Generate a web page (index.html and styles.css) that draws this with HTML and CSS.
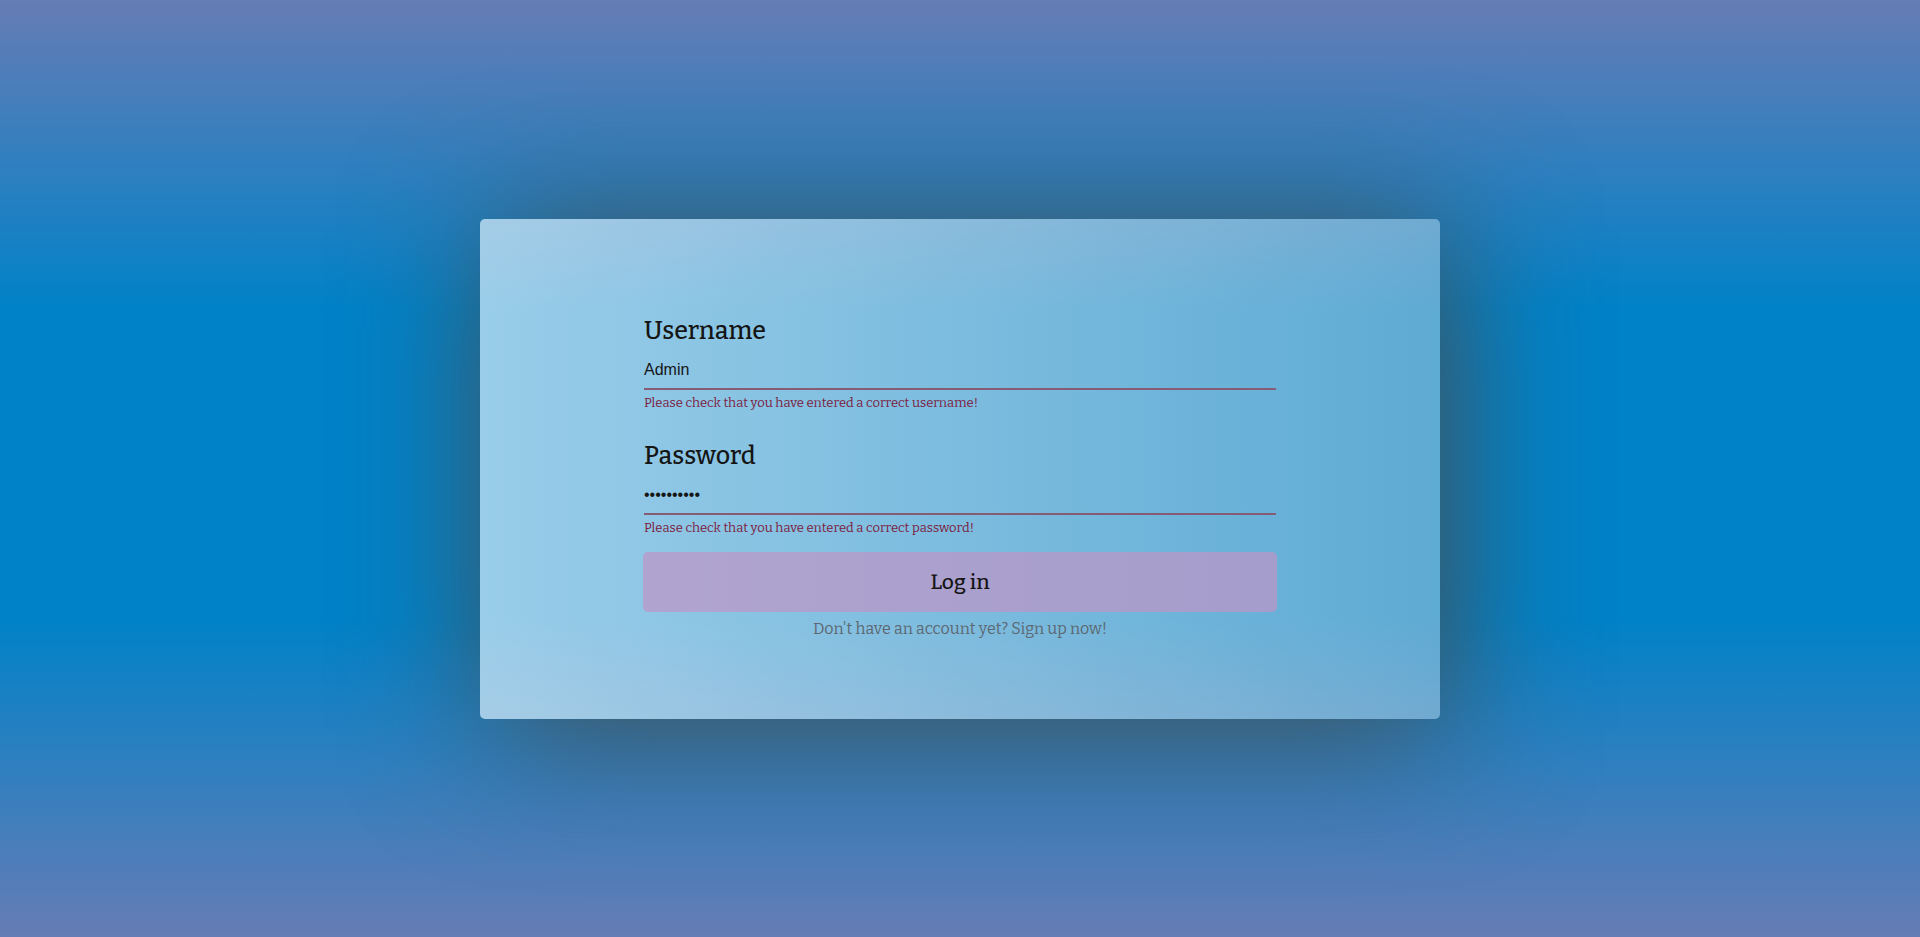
FILE: index.html
```html
<!DOCTYPE html>
<html lang="en">
<head>
<meta charset="utf-8">
<title>Log in</title>
<link rel="stylesheet" href="styles.css">
</head>
<body>
<main class="card">
  <form class="login">
    <div class="field">
      <label class="label" for="username">Username</label>
      <input class="input" id="username" type="text" value="Admin" aria-describedby="username-error">
      <p class="error" id="username-error">Please check that you have entered a correct username!</p>
    </div>
    <div class="field">
      <label class="label" for="password">Password</label>
      <input class="input" id="password" type="password" value="adminadmin" aria-describedby="password-error">
      <p class="error" id="password-error">Please check that you have entered a correct password!</p>
    </div>
    <button class="submit" type="submit">Log in</button>
    <a class="signup" href="#signup">Don't have an account yet? Sign up now!</a>
  </form>
</main>
</body>
</html>
```
FILE: styles.css
```css
* {
  box-sizing: border-box;
}

body {
  margin: 0;
  min-height: 100vh;
  display: flex;
  align-items: center;
  justify-content: center;
  font-family: Bitter, "DejaVu Serif Condensed", "DejaVu Serif", serif;
  color: #151515;
  background: linear-gradient(#667cb5, #0082c8 33%, #0082c8 66%, #667cb5);
}

.card {
  width: 50%;
  min-height: 500px;
  padding: 95px 163px 73px;
  border-radius: 5px;
  background: linear-gradient(to right, rgba(255, 255, 255, 0.6), rgba(235, 232, 230, 0.4));
  box-shadow: 10px 10px 140px rgba(82, 72, 68, 0.9);
}

.login {
  display: flex;
  flex-direction: column;
}

.field {
  display: flex;
  flex-direction: column;
  margin: 0 1px 23px;
}

.field + .field {
  margin-bottom: 11px;
}

.label {
  font-size: 25px;
  font-weight: 500;
  line-height: 34px;
}

.input {
  height: 42px;
  padding: 5px 0 0;
  border: 0;
  border-bottom: 2px solid #855c74;
  outline: 0;
  background: transparent;
  color: #151515;
  font: 16px "Liberation Sans", Arial, sans-serif;
}

.error {
  margin: 0;
  font-size: 13px;
  line-height: 26px;
  color: #7c2040;
}

.submit {
  height: 60px;
  padding: 0;
  border: 0;
  border-radius: 5px;
  background: rgba(191, 148, 198, 0.7);
  color: #151515;
  font: inherit;
  font-size: 21px;
  font-weight: 500;
  cursor: pointer;
}

.signup {
  align-self: center;
  font-size: 16px;
  line-height: 34px;
  color: #5d6872;
  text-decoration: none;
}
```
